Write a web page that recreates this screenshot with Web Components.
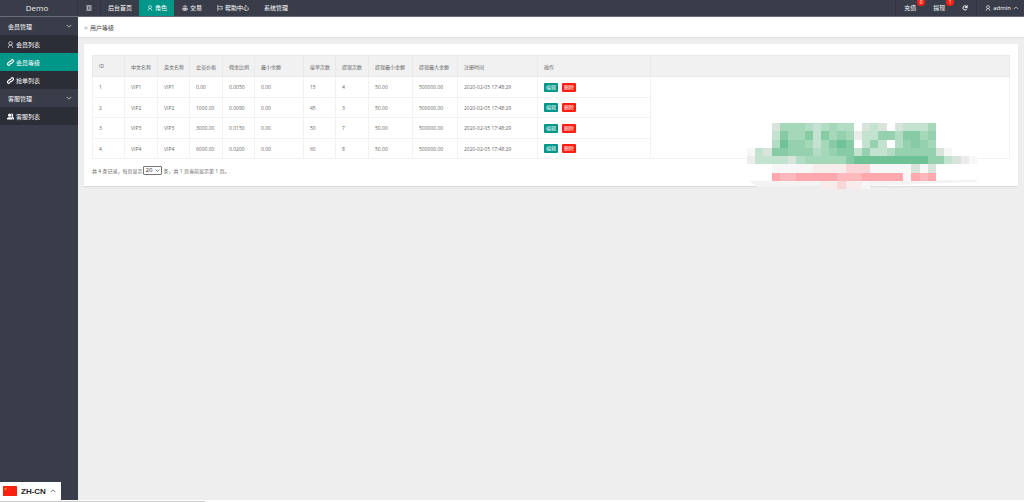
<!DOCTYPE html>
<html lang="zh-CN">
<head>
<meta charset="utf-8">
<title>Demo</title>
<style>
body { margin: 0; font-family: "Open Sans", "Noto Sans CJK SC", sans-serif; font-size: 6px; color: #666; background: #eee; }
</style>
</head>
<body>
<admin-app></admin-app>
<script>
const ICONS = {
  user: '<circle cx="8" cy="5.500" r="4"/><path d="M3 15.500c0-4 2-6 5-6s5 2 5 6"/>',
  link: '<g stroke-width="2.800"><path d="M7 9.500a3 3 0 0 0 4 0l3-3a2.800 2.800 0 0 0-4-4L8.500 4"/><path d="M9 6.500a3 3 0 0 0-4 0l-3 3a2.800 2.800 0 0 0 4 4L7.500 12"/></g>',
  group: '<g fill="currentColor" stroke="none"><circle cx="6" cy="5" r="3.600"/><path d="M0 15v-2c0-2 2-3 4-3.500h4c2 .5 4 1.500 4 3.500v2z"/><path d="M10 1.500c3-.8 4.500 1.500 4 4-.2 1.500-1 2.200-1 3.500 2 .6 3 1.500 3 3v3h-3c0-3-1-4.500-3-5.500 1-2 1.500-5 0-8z"/></g>',
  menu: '<path stroke-width="2.400" d="M1 2.500h14M1 13.500h14M7 8h8M2 6l3 2-3 2"/>',
  scale: '<path d="M3 6a5 4 0 0 1 10 0M1 9h14M2 9v4h4V9M10 9v4h4V9M8 2v12M4 15h8"/>',
  flag: '<path d="M2 1v15M2 3h3l3 1h7l-2 3 2 4H8l-3-1H2"/>',
  refresh: '<path stroke-width="2.600" d="M13 10a5.500 5.500 0 1 1-1-6"/><path fill="currentColor" d="M14 1v6H8z"/>',
  down: '<path d="M2 5l6 6 6-6"/>',
  up: '<path d="M2 11l6-6 6 6"/>'
};

function define(name, html, setup) {
  customElements.define(name, class extends HTMLElement {
    connectedCallback() {
      if (this.shadowRoot) return;
      const root = this.attachShadow({ mode: 'open' });
      root.innerHTML = html;
      if (setup) setup(this, root);
    }
  });
}

define('ui-icon', `<style>
:host { display: inline-block; width: 6px; height: 6px; flex: none; }
svg { display: block; width: 100%; height: 100%; fill: none; stroke: currentColor; stroke-width: 1.600; }
</style><svg viewBox="0 0 16 16" aria-hidden="true"></svg>`,
(el, root) => { root.querySelector('svg').innerHTML = ICONS[el.getAttribute('name')] || ''; });

define('top-item', `<style>
:host { display: flex; position: relative; border-left: 1px solid transparent; }
:host([divided]) { border-left-color: #333641; }
:host([active]) { background: #009688; border-left-color: #009688; }
a { display: flex; align-items: center; gap: 2px; padding: 0 7px; color: #fff; text-decoration: none; line-height: 16px; white-space: nowrap; }
:host([wide]) a { padding: 0 8px; }
:host([account]) a { padding: 0 5px 0 8px; }
span { position: absolute; top: -2px; right: -1px; width: 8px; height: 8px; border-radius: 4px; background: #ff1e12; color: #fff; font-size: 5px; line-height: 8px; text-align: center; }
span:empty { display: none; }
</style><a href="#"><slot></slot></a><span></span>`,
(el, root) => { root.querySelector('span').textContent = el.getAttribute('badge') || ''; });

define('top-bar', `<style>
:host { display: flex; height: 16px; background: #393d49; color: #fff; border-bottom: 1px solid #6b6e78; box-sizing: content-box; }
.brand { width: 77px; box-sizing: border-box; padding-right: 3px; text-align: center; font-size: 8px; line-height: 15px; color: #eee; flex: none; }
nav { display: flex; }
nav.end { margin-left: auto; }
</style>
<div class="brand">Demo</div>
<nav>
<top-item divided wide><ui-icon name="menu"></ui-icon></top-item>
<top-item divided>后台首页</top-item>
<top-item active><ui-icon name="user"></ui-icon>角色</top-item>
<top-item><ui-icon name="scale"></ui-icon>交易</top-item>
<top-item><ui-icon name="flag"></ui-icon>帮助中心</top-item>
<top-item>系统管理</top-item>
</nav>
<nav class="end">
<top-item divided wide badge="0">充值</top-item>
<top-item wide badge="1">提现</top-item>
<top-item wide><ui-icon name="refresh"></ui-icon></top-item>
<top-item divided account><ui-icon name="user"></ui-icon>admin<ui-icon name="up"></ui-icon></top-item>
</nav>`);

define('side-link', `<style>
:host { display: block; background: #2b2e37; }
:host([active]) { background: #009688; }
a { display: flex; align-items: center; gap: 2px; height: 18px; padding-left: 7px; color: #fff; text-decoration: none; }
ui-icon { width: 7px; height: 7px; }
</style><a href="#"><slot></slot></a>`,
(el, root) => {
  const icon = document.createElement('ui-icon');
  icon.setAttribute('name', el.getAttribute('icon'));
  root.querySelector('a').prepend(icon);
});

define('side-group', `<style>
:host { display: block; }
button { display: flex; align-items: center; justify-content: space-between; width: 100%; height: 18px; padding: 0 6px 0 8px; border: 0; background: none; color: #fff; font: inherit; }
</style><button type="button"><span></span><ui-icon name="down"></ui-icon></button><slot></slot>`,
(el, root) => { root.querySelector('span').textContent = el.getAttribute('label'); });

define('side-menu', `<style>
:host { display: block; background: #393d49; color: #fff; }
</style>
<side-group label="会员管理">
<side-link icon="user">会员列表</side-link>
<side-link icon="link" active>会员等级</side-link>
<side-link icon="link">抢单列表</side-link>
</side-group>
<side-group label="客服管理">
<side-link icon="group">客服列表</side-link>
</side-group>`);

define('crumb-bar', `<style>
:host { display: flex; align-items: center; gap: 2px; height: 20px; padding-left: 6px; background: #fff; border-bottom: 1px solid #dde3e2; color: #444; }
i { font-style: normal; font-size: 8px; line-height: 8px; color: #999; }
</style><i>»</i><slot></slot>`);

const HEADS = ['ID', '中文名称', '英文名称', '会员价格', '佣金比例', '最小余额', '接单次数', '提现次数', '提现最小金额', '提现最大金额', '注册时间', '操作', ''];
const WIDTHS = [32, 33, 32, 33, 32, 49, 32, 33, 44, 45, 80, 113];
const ROWS = [
  ['1', 'VIP1', 'VIP1', '0.00', '0.0050', '0.00', '15', '4', '50.00', '500000.00', '2020-02-05 17:48:29'],
  ['2', 'VIP2', 'VIP2', '1000.00', '0.0090', '0.00', '45', '3', '50.00', '500000.00', '2020-02-05 17:48:29'],
  ['3', 'VIP3', 'VIP3', '3000.00', '0.0150', '0.00', '50', '7', '50.00', '500000.00', '2020-02-05 17:48:29'],
  ['4', 'VIP4', 'VIP4', '6000.00', '0.0200', '0.00', '60', '8', '50.00', '500000.00', '2020-02-05 17:48:29']
];

define('level-table', `<style>
:host { display: block; font-size: 5px; }
table { width: 100%; table-layout: fixed; border-collapse: collapse; border: 1px solid #eee; }
th, td { padding: 0 0 0 6px; border: 1px solid #f2f2f2; text-align: left; font-weight: 400; white-space: nowrap; }
th { background: #f1f1f1; border-color: #e9e9e9; }
thead tr, tbody tr:nth-child(odd) { height: 21px; }
tbody tr:nth-child(even) { height: 20px; }
.ops { display: flex; gap: 4px; }
button { width: 14px; height: 9px; padding: 0; border: 0; border-radius: 1px; background: #009688; color: #fff; font: inherit; line-height: 9px; }
button.del { background: #ff1e12; }
</style><table><colgroup></colgroup><thead><tr></tr></thead><tbody></tbody></table>`,
(el, root) => {
  root.querySelector('colgroup').innerHTML = WIDTHS.map(w => `<col style="width:${w}px">`).join('') + '<col>';
  root.querySelector('thead tr').innerHTML = HEADS.map(h => `<th scope="col">${h}</th>`).join('');
  root.querySelector('tbody').innerHTML = ROWS.map((r, i) =>
    `<tr>${r.map(c => `<td>${c}</td>`).join('')}<td><div class="ops"><button type="button">编辑</button><button type="button" class="del">删除</button></div></td>${i ? '' : '<td rowspan="4"></td>'}</tr>`).join('');
});

define('page-info', `<style>
:host { display: flex; align-items: center; gap: 1px; margin-top: 7px; font-size: 5px; height: 9px; white-space: nowrap; }
select { width: 19px; height: 9px; padding: 0 0 0 1px; border: 1px solid #777; border-radius: 1px; background: #fff; color: #222; font: inherit; font-size: 6px; line-height: 7px; appearance: none; }
.pick { position: relative; display: flex; }
.pick ui-icon { position: absolute; right: 2px; top: 2px; width: 5px; height: 5px; color: #000; pointer-events: none; }
</style>
<label for="size">共 4 条记录，每页显示</label>
<div class="pick"><select id="size"><option>20</option><option>50</option></select><ui-icon name="down"></ui-icon></div>
<span>条，共 1 页当前显示第 1 页。</span>`);

const TONES = { a: '#6fc196', b: '#86cba4', c: '#95d1af', d: '#a5d7b9', e: '#b2dcc3', f: '#c3e2cf', g: '#d8e3dc', h: '#ececec', i: '#f7f7f7', p: '#ffa9af', q: '#ffb9bd', r: '#fbd6d9', s: '#f8eded' };
const TILES = [
  '...gdddefedee.gfg.gfffd',
  '...fbddbfbdcdhffccebbdc',
  '...eaccdfdbab.fcf.ecbcd',
  'ifgbbcccedcbbfcffecccccgi',
  'hffffgedddddbaaaaaaaaaccfghi',
  '...iiiiissssrrriiiiigig',
  '...pqqpppppqqqpppppipqp',
  '.........ssrssi'
];

define('pixel-mosaic', `<style>
:host { display: block; width: 230px; height: 66px; pointer-events: none; }
svg { display: block; width: 100%; height: 100%; }
</style><svg viewBox="0 0 280 80" preserveAspectRatio="none" aria-hidden="true"><path fill="#f3f3f3" d="M3 70h94l186-1v2l-100 4-80 2-91 1z"/><g shape-rendering="crispEdges"></g></svg>`,
(el, root) => {
  root.querySelector('g').innerHTML = TILES.map((row, y) => [...row].map((t, x) =>
    TONES[t] ? `<rect x="${x * 10}" y="${y * 10}" width="10" height="10" fill="${TONES[t]}"/>` : '').join('')).join('');
});

define('content-card', `<style>
:host { display: block; position: relative; margin: 6px 6px 0; padding: 11px 8px; background: #fff; box-shadow: 0 1px 1px #ddd; }
pixel-mosaic { position: absolute; right: 41px; bottom: -3px; }
</style><slot></slot><pixel-mosaic></pixel-mosaic>`);

define('lang-switch', `<style>
:host { display: block; position: fixed; left: 0; bottom: 2px; }
button { display: flex; align-items: center; gap: 4px; height: 18px; width: 61px; padding: 0 3px; border: 0; background: #fff; color: #222; font: bold 8px "Liberation Sans", sans-serif; white-space: nowrap; }
svg { width: 14px; height: 10px; flex: none; }
</style><button type="button"><svg viewBox="0 0 28 20" aria-hidden="true"><rect width="28" height="20" rx="1" fill="#fa2010"/><path fill="#ffb020" d="M5 3l.8 2H8L6.300 6.300 7 8.500 5 7.200 3 8.500l.7-2.200L2 5h2.200z"/><circle cx="10" cy="3" r=".7" fill="#ffb020"/><circle cx="11" cy="6" r=".7" fill="#ffb020"/></svg>ZH-CN<ui-icon name="up"></ui-icon></button>`);

define('admin-app', `<style>
:host { display: flex; flex-direction: column; min-height: 100vh; }
.body { display: flex; flex: 1; }
side-menu { width: 78px; flex: none; }
main { flex: 1; min-width: 0; }
footer { display: flex; align-items: flex-end; height: 2px; background: #fff; }
footer div { width: 20%; height: 1px; background: #ccc; }
</style>
<top-bar></top-bar>
<div class="body">
<side-menu></side-menu>
<main>
<crumb-bar>用户等级</crumb-bar>
<content-card><level-table></level-table><page-info></page-info></content-card>
</main>
</div>
<footer><div></div></footer>
<lang-switch></lang-switch>`);
</script>
</body>
</html>
